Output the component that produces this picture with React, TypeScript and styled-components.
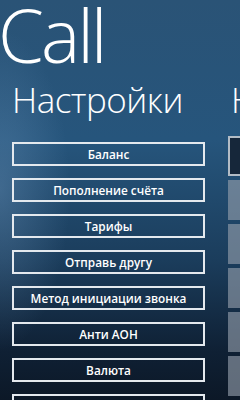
import styled, { createGlobalStyle } from "styled-components";

const GlobalStyle = createGlobalStyle`
    html, body {
        margin: 0;
        padding: 0;
        background: #0e1b2a;
    }
    * {
        box-sizing: border-box;
    }
`

const Screen = styled.div`
    position: relative;
    width: 240px;
    height: 400px;
    overflow: hidden;
    color: #ffffff;
    font-family: "Open Sans", "Noto Sans", sans-serif;
    background:
        radial-gradient(ellipse 70px 160px at 0px 190px, rgba(120, 160, 200, 0.35), rgba(120, 160, 200, 0) 100%),
        linear-gradient(180deg, #2a5376 0%, #26557c 35%, #1b3d5c 65%, #0f2034 88%, #0c1827 100%);
`

const AppTitle = styled.h1`
    margin: -2px 0 0 -2px;
    height: 74px;
    font-size: 74px;
    line-height: 74px;
    font-weight: 300;
    letter-spacing: -3px;
    white-space: nowrap;
`

const Panorama = styled.div`
    display: flex;
    margin-top: 10px;
    width: max-content;
`

const Section = styled.section<{ $width: number }>`
    display: flex;
    flex-direction: column;
    width: ${({ $width }) => $width}px;
    padding-left: 12px;
`

const SectionTitle = styled.h2<{ $offset: number }>`
    margin: 0 0 0 ${({ $offset }) => $offset}px;
    height: 35px;
    font-size: 35px;
    line-height: 35px;
    font-weight: 300;
    letter-spacing: -0.5px;
    white-space: nowrap;
`

const ButtonList = styled.div`
    display: flex;
    flex-direction: column;
    gap: 12px;
    margin-top: 25px;
`

const MenuButton = styled.button`
    display: flex;
    align-items: center;
    justify-content: center;
    width: 193px;
    height: 24px;
    padding: 0;
    background: transparent;
    border: 2px solid #e4e9ee;
    color: #ffffff;
    font-family: "Open Sans", "Noto Sans", sans-serif;
    font-size: 11.8px;
    font-weight: 600;
    white-space: nowrap;
`

const TileList = styled.div`
    display: flex;
    flex-direction: column;
    gap: 4px;
    margin-top: 19px;
`

const Tile = styled.div<{ $active?: boolean }>`
    display: flex;
    align-items: center;
    width: 180px;
    height: 40px;
    padding-left: 14px;
    font-size: 11px;
    font-weight: 600;
    background: ${({ $active }) => ($active ? "#16273a" : "rgba(150, 160, 172, 0.62)")};
    border: ${({ $active }) => ($active ? "2px solid #b3bcc5" : "none")};
`

const menu = [
    "Баланс",
    "Пополнение счёта",
    "Тарифы",
    "Отправь другу",
    "Метод инициации звонка",
    "Анти АОН",
    "Валюта",
    "О программе",
]

const tiles = ["", "", "4", "", "", ""]

const App = () => {
    return (
        <>
            <GlobalStyle />
            <Screen>
                <AppTitle>Call</AppTitle>
                <Panorama>
                    <Section $width={216}>
                        <SectionTitle $offset={0}>Настройки</SectionTitle>
                        <ButtonList>
                            {menu.map((item) => (
                                <MenuButton key={item}>{item}</MenuButton>
                            ))}
                        </ButtonList>
                    </Section>
                    <Section $width={200}>
                        <SectionTitle $offset={3}>Набор</SectionTitle>
                        <TileList>
                            {tiles.map((t, i) => (
                                <Tile key={i} $active={i === 0}>{t}</Tile>
                            ))}
                        </TileList>
                    </Section>
                </Panorama>
            </Screen>
        </>
    )
}

export default App;
